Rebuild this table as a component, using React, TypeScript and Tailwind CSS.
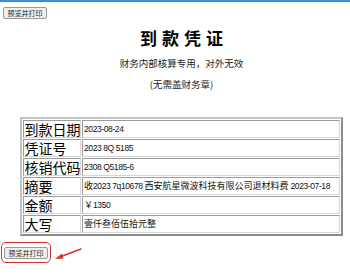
import React from 'react';

const cjk = "font-['Noto_Sans_CJK_SC',sans-serif]";

const rows: { label: string; value: string }[] = [
  { label: '到款日期', value: '2023-08-24' },
  { label: '凭证号', value: '2023 8Q 5185' },
  { label: '核销代码', value: '2308 Q5185-6' },
  { label: '摘要', value: '收2023 7q10678 西安航星微波科技有限公司退材料费 2023-07-18' },
  { label: '金额', value: '￥1350' },
  { label: '大写', value: '壹仟叁佰伍拾元整' },
];

// Han / full-width runs get the CJK face, everything else a tighter Latin face.
const CJK_RUN = /([\u3000-\u9fff\uff00-\uffef]+)/;

function MixedText({ text }: { text: string }) {
  return (
    <>
      {text.split(CJK_RUN).filter(Boolean).map((part, i) =>
        CJK_RUN.test(part) ? (
          <span key={i} className={`${cjk} text-[9px] leading-[12px]`}>{part}</span>
        ) : (
          <span key={i} className="font-['Liberation_Sans',Arial,sans-serif] text-[8.5px] leading-[12px] tracking-[-0.4px]">{part}</span>
        ),
      )}
    </>
  );
}

function PrintButton() {
  return (
    <button
      type="button"
      className={`${cjk} h-[12px] w-[44px] rounded-[2px] border border-[#9a9a9a] bg-[#efefef] text-[7px] leading-[10px] text-[#222] flex items-center justify-center`}
    >
      预览并打印
    </button>
  );
}

export default function App() {
  return (
    <div className={`${cjk} w-[350px] h-[279px] overflow-hidden bg-white text-black`}>
      <div className="h-[1.5px] bg-[#3b8de0]" />
      <div className="h-[1.5px] bg-[#eef3f9]" />

      <div className="ml-[3px] mt-[4px]">
        <PrintButton />
      </div>

      <div className="ml-[20px] w-[323px]">
        <h1 className="mt-[7px] text-center text-[17px] leading-[24px] font-bold tracking-[5px] pl-[5px]">
          到款凭证
        </h1>
        <p className="mt-[7px] text-center text-[9.5px] leading-[12px] text-[#222]">
          财务内部核算专用，对外无效
        </p>
        <p className="mt-[9px] text-center text-[9.5px] leading-[12px] text-[#222]">
          (无需盖财务章)
        </p>

        <table className="mt-[27px] w-[323px] table-fixed border-separate [border-spacing:1px_1.5px] border-2 border-t-[#c4c4c4] border-l-[#c4c4c4] border-r-[#8c8c8c] border-b-[#8c8c8c]">
          <colgroup>
            <col className="w-[58px]" />
            <col />
          </colgroup>
          <tbody>
            {rows.map(r => (
              <tr key={r.label} className="h-[18px]">
                <td className="border border-t-[#9c9c9c] border-l-[#9c9c9c] border-r-[#d6d6d6] border-b-[#d6d6d6] p-0 pl-[0.5px] text-[14px] leading-[16px] whitespace-nowrap">
                  {r.label}
                </td>
                <td className="border border-t-[#9c9c9c] border-l-[#9c9c9c] border-r-[#d6d6d6] border-b-[#d6d6d6] p-0 pl-[1px] text-[9px] leading-[12px] text-[#111] whitespace-nowrap">
                  <MixedText text={r.value} />
                </td>
              </tr>
            ))}
          </tbody>
        </table>
      </div>

      <div className="mt-[6px] ml-[1px] flex items-center">
        <div className="rounded-[5px] border-[1.5px] border-[#d8302c] px-[2px] py-[3.5px]">
          <PrintButton />
        </div>
        <svg width="30" height="14" viewBox="0 0 30 14" className="ml-[2px] mt-[2px]">
          <line x1="28" y1="2" x2="8" y2="9.5" stroke="#d8302c" strokeWidth="1.4" strokeLinecap="round" />
          <polygon points="2,12 9,6.5 10.5,11.5" fill="#d8302c" />
        </svg>
      </div>
    </div>
  );
}
